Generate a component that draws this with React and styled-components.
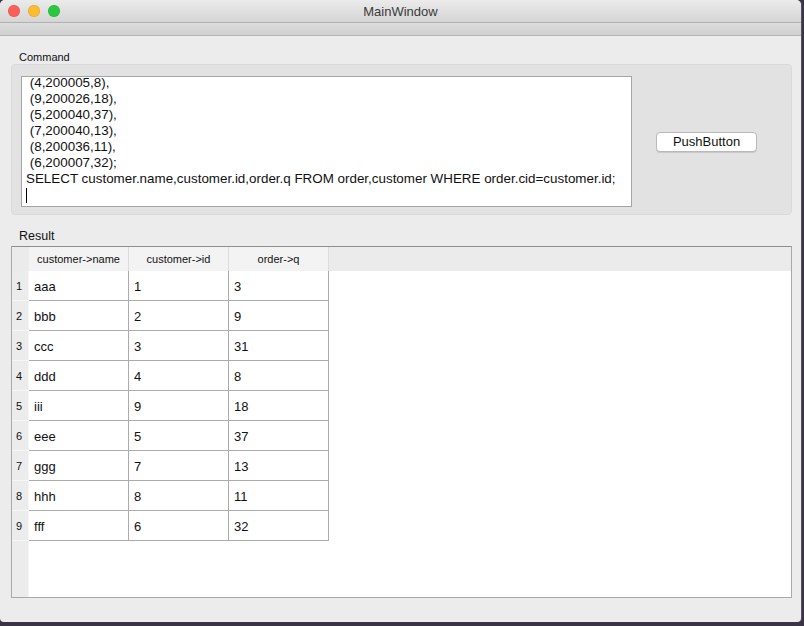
import React from "react";
import styled, { createGlobalStyle } from "styled-components";

const GlobalStyle = createGlobalStyle`
  html, body {
    margin: 0;
    padding: 0;
    background: #3b3446;
  }
  body {
    font-family: "Liberation Sans", Arial, sans-serif;
    overflow: hidden;
  }
`;

const commandLines = [
  " (4,200005,8),",
  " (9,200026,18),",
  " (5,200040,37),",
  " (7,200040,13),",
  " (8,200036,11),",
  " (6,200007,32);",
  "SELECT customer.name,customer.id,order.q FROM order,customer WHERE order.cid=customer.id;",
];

const columns = ["customer->name", "customer->id", "order->q"];

const rows = [
  ["aaa", "1", "3"],
  ["bbb", "2", "9"],
  ["ccc", "3", "31"],
  ["ddd", "4", "8"],
  ["iii", "9", "18"],
  ["eee", "5", "37"],
  ["ggg", "7", "13"],
  ["hhh", "8", "11"],
  ["fff", "6", "32"],
];

const lights = ["#fc5f57", "#fdbc2e", "#28c840"];

const App = () => {
  return (
    <>
      <GlobalStyle />
      <StWindow>
        <StTitleBar>
          <StLights>
            {lights.map((c) => (
              <StLight key={c} color={c} />
            ))}
          </StLights>
          <StTitle>MainWindow</StTitle>
        </StTitleBar>
        <StToolStrip />
        <StContent>
          <StLabel>Command</StLabel>
          <StGroup>
            <StEditor>
              <StEditorText>
                {commandLines.map((line, n) => (
                  <StLine key={`line${n}`}>{line}</StLine>
                ))}
                <StLine>
                  <StCaret />
                </StLine>
              </StEditorText>
            </StEditor>
            <StButtonArea>
              <StPushButton>PushButton</StPushButton>
            </StButtonArea>
          </StGroup>
          <StLabel result>Result</StLabel>
          <StTable>
            <StHeaderRow>
              <StCorner />
              {columns.map((c) => (
                <StHeaderCell key={c}>{c}</StHeaderCell>
              ))}
            </StHeaderRow>
            <StBody>
              <StRowHeaders>
                {rows.map((_, n) => (
                  <StRowNumber key={`num${n}`}>{n + 1}</StRowNumber>
                ))}
              </StRowHeaders>
              <StCells>
                {rows.map((row, n) => (
                  <StRow key={`row${n}`}>
                    {row.map((v, i) => (
                      <StCell key={`cell${n}-${i}`}>{v}</StCell>
                    ))}
                  </StRow>
                ))}
              </StCells>
            </StBody>
          </StTable>
        </StContent>
      </StWindow>
    </>
  );
};

export default App;

const StWindow = styled.div`
  width: 801px;
  height: 622px;
  display: flex;
  flex-direction: column;
  background: #ececec;
  border-radius: 5px 5px 4px 4px;
  overflow: hidden;
  box-shadow: 1px 0 0 #55505e;
`;

const StTitleBar = styled.div`
  position: relative;
  height: 22px;
  flex: none;
  display: flex;
  align-items: center;
  justify-content: center;
  background: linear-gradient(#ebebeb, #d5d5d5);
  border-bottom: 1px solid #b1b1b1;
`;

const StLights = styled.div`
  position: absolute;
  left: 8px;
  top: 5px;
  display: flex;
  gap: 8px;
`;

const StLight = styled.span`
  width: 12px;
  height: 12px;
  border-radius: 50%;
  background: ${(p) => p.color};
  box-shadow: inset 0 0 0 0.5px rgba(0, 0, 0, 0.15);
`;

const StTitle = styled.div`
  font-size: 13px;
  color: #3a3a3a;
`;

const StToolStrip = styled.div`
  height: 12px;
  flex: none;
  background: linear-gradient(#dcdcdc, #d0d0d0);
  border-bottom: 1px solid #b5b5b5;
`;

const StContent = styled.div`
  flex: 1;
  display: flex;
  flex-direction: column;
  padding: 0 9px 24px 11px;
  min-height: 0;
`;

const StLabel = styled.div`
  font-size: ${(p) => (p.result ? "12.5px" : "11px")};
  color: #111;
  padding-left: 8px;
  height: ${(p) => (p.result ? "20px" : "14px")};
  line-height: ${(p) => (p.result ? "20px" : "14px")};
  margin-top: ${(p) => (p.result ? "11px" : "14px")};
`;

const StGroup = styled.div`
  height: 151px;
  flex: none;
  box-sizing: border-box;
  display: flex;
  padding: 11px 0 8px 9px;
  background: #e2e2e2;
  border: 1px solid #dadada;
  border-radius: 4px;
`;

const StEditor = styled.div`
  width: 611px;
  height: 131px;
  box-sizing: border-box;
  background: #fff;
  border: 1px solid #a5a5a5;
  overflow: hidden;
  padding-left: 4px;
`;

const StEditorText = styled.div`
  margin-top: -2px;
  font-size: 13.4px;
  line-height: 16px;
  color: #111;
  white-space: pre;
`;

const StLine = styled.div`
  height: 16px;
`;

const StCaret = styled.span`
  display: inline-block;
  width: 1px;
  height: 15px;
  margin-top: 1px;
  background: #000;
  vertical-align: top;
`;

const StButtonArea = styled.div`
  flex: 1;
  display: flex;
  align-items: center;
  justify-content: center;
  padding-right: 10px;
`;

const StPushButton = styled.button`
  width: 101px;
  height: 20px;
  margin-top: 1px;
  padding: 0;
  background: #fff;
  border: 1px solid #b9b9b9;
  border-radius: 4px;
  box-shadow: 0 1px 0 #c9c9c9;
  font-family: "Liberation Sans", Arial, sans-serif;
  font-size: 13px;
  color: #111;
`;

const StTable = styled.div`
  flex: 1;
  display: flex;
  flex-direction: column;
  background: #fff;
  border: 1px solid #a9a9a9;
  border-top-color: #8f8f8f;
  min-height: 0;
`;

const StHeaderRow = styled.div`
  height: 24px;
  flex: none;
  display: flex;
  background: #ebebeb;
`;

const StCorner = styled.div`
  width: 17px;
  background: #ebebeb;
`;

const StHeaderCell = styled.div`
  width: 100px;
  box-sizing: border-box;
  display: flex;
  align-items: center;
  justify-content: center;
  background: #f3f3f3;
  border-right: 1px solid #dcdcdc;
  font-size: 11px;
  color: #111;
`;

const StBody = styled.div`
  flex: 1;
  display: flex;
  min-height: 0;
`;

const StRowHeaders = styled.div`
  width: 17px;
  flex: none;
  background: #ececec;
  border-right: 1px solid #f6f6f6;
  box-sizing: border-box;
`;

const StRowNumber = styled.div`
  height: 30px;
  display: flex;
  align-items: center;
  justify-content: center;
  padding-right: 2px;
  font-size: 11px;
  color: #111;
  border-bottom: 1px solid #f6f6f6;
  box-sizing: border-box;
`;

const StCells = styled.div`
  display: flex;
  flex-direction: column;
`;

const StRow = styled.div`
  display: flex;
  height: 30px;
`;

const StCell = styled.div`
  width: 100px;
  box-sizing: border-box;
  display: flex;
  align-items: center;
  padding-left: 5px;
  padding-top: 1px;
  font-size: 13px;
  color: #111;
  border-right: 1px solid #ababab;
  border-bottom: 1px solid #ababab;
`;
